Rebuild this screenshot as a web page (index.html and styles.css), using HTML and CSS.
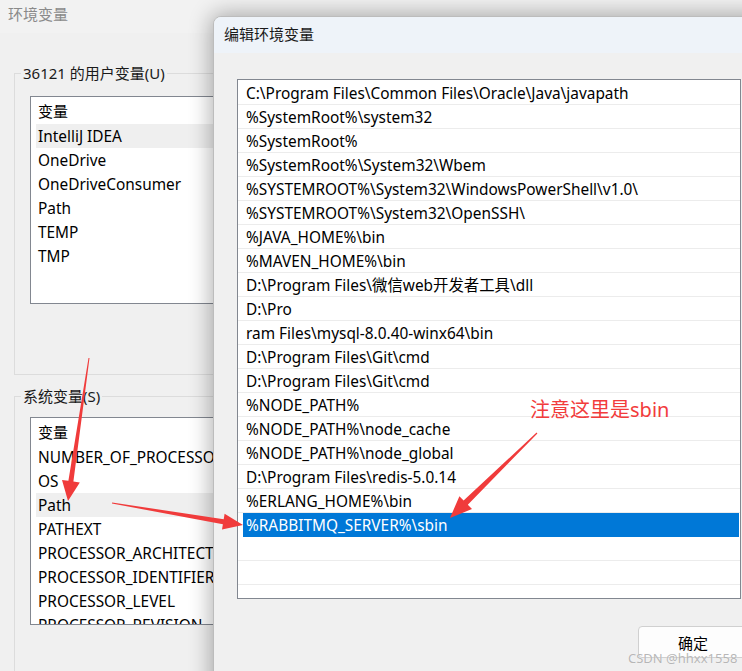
FILE: index.html
```html
<!DOCTYPE html>
<html lang="zh-CN">
<head>
<meta charset="utf-8">
<title>编辑环境变量</title>
<link rel="stylesheet" href="styles.css">
</head>
<body>
<div class="screen">
  <div class="backwin">
    <div class="bw-title">环境变量</div>
    <div class="group g-user">
      <div class="legend">36121 的用户变量(U)</div>
      <div class="list l-user">
        <div class="hdr">变量</div>
        <div class="row hl">IntelliJ IDEA</div>
        <div class="row">OneDrive</div>
        <div class="row">OneDriveConsumer</div>
        <div class="row">Path</div>
        <div class="row">TEMP</div>
        <div class="row">TMP</div>
      </div>
    </div>
    <div class="group g-sys">
      <div class="legend">系统变量(S)</div>
      <div class="list l-sys">
        <div class="hdr">变量</div>
        <div class="row">NUMBER_OF_PROCESSORS</div>
        <div class="row">OS</div>
        <div class="row hl">Path</div>
        <div class="row">PATHEXT</div>
        <div class="row">PROCESSOR_ARCHITECTURE</div>
        <div class="row">PROCESSOR_IDENTIFIER</div>
        <div class="row">PROCESSOR_LEVEL</div>
        <div class="row">PROCESSOR_REVISION</div>
      </div>
    </div>
  </div>

  <div class="dialog">
    <div class="dlg-title">编辑环境变量</div>
    <div class="dlg-body">
      <div class="plist">
        <div class="prow">C:\Program Files\Common Files\Oracle\Java\javapath</div>
        <div class="prow">%SystemRoot%\system32</div>
        <div class="prow">%SystemRoot%</div>
        <div class="prow">%SystemRoot%\System32\Wbem</div>
        <div class="prow">%SYSTEMROOT%\System32\WindowsPowerShell\v1.0\</div>
        <div class="prow">%SYSTEMROOT%\System32\OpenSSH\</div>
        <div class="prow">%JAVA_HOME%\bin</div>
        <div class="prow">%MAVEN_HOME%\bin</div>
        <div class="prow">D:\Program Files\微信web开发者工具\dll</div>
        <div class="prow">D:\Pro</div>
        <div class="prow">ram Files\mysql-8.0.40-winx64\bin</div>
        <div class="prow">D:\Program Files\Git\cmd</div>
        <div class="prow">D:\Program Files\Git\cmd</div>
        <div class="prow">%NODE_PATH%</div>
        <div class="prow">%NODE_PATH%\node_cache</div>
        <div class="prow">%NODE_PATH%\node_global</div>
        <div class="prow">D:\Program Files\redis-5.0.14</div>
        <div class="prow">%ERLANG_HOME%\bin</div>
        <div class="prow sel">%RABBITMQ_SERVER%\sbin</div>
        <div class="prow"></div>
        <div class="prow"></div>
      </div>
      <div class="btnrow">
        <button class="btn" type="button">确定</button>
      </div>
    </div>
  </div>

  <div class="note">注意这里是sbin</div>

  <svg class="arrows" width="742" height="671" viewBox="0 0 742 671" aria-hidden="true">
    <polygon points="88.5,357.9 68.4,480.8 62,479.9 68,501 79.8,482.5 73.4,481.6 89.5,358.1"/>
    <polygon points="112.1,502.5 223.7,519.2 224.6,513.8 243,525 222,529.6 222.9,524.2 111.9,503.5"/>
    <polygon points="536.6,432.6 463.6,500.5 459.4,496.2 450,518 472,509 467.8,504.7 537.4,433.4"/>
  </svg>

  <div class="wm">CSDN @hhxx1558</div>
</div>
</body>
</html>
```

FILE: styles.css
```css
* { box-sizing: border-box; }

html, body {
  margin: 0;
  padding: 0;
  background: #f0f0f0;
}

body {
  font-family: "Noto Sans", "Noto Sans CJK SC", sans-serif;
  font-size: 15px;
  color: #000;
}

.screen {
  position: relative;
  width: 742px;
  height: 671px;
  overflow: hidden;
  background: #f0f0f0;
}

/* ---------- background window ---------- */
.bw-title {
  height: 33px;
  line-height: 28px;
  padding-left: 8px;
  font-size: 15px;
  color: #8a8a8a;
  background: #f2f2f2;
}

.group {
  margin-left: 14px;
  width: 800px;
  border: 1px solid #dcdcdc;
}

.g-user {
  margin-top: 40px;
  height: 302px;
}

.g-sys {
  margin-top: 21px;
  height: 320px;
}

.legend {
  display: block;
  width: max-content;
  margin: -11px 0 0 6px;
  padding: 0 2px;
  height: 20px;
  line-height: 20px;
  background: #f0f0f0;
  color: #1a1a1a;
}

.list {
  margin-left: 15px;
  width: 420px;
  height: 208px;
  border: 1px solid #828790;
  background: #fff;
  overflow: hidden;
  white-space: nowrap;
  font-size: 15.4px;
}

.l-user { margin-top: 13px; }
.l-sys { margin-top: 11px; }

.hdr {
  height: 27px;
  line-height: 28px;
  padding-left: 7px;
  font-size: 15px;
}

.row {
  height: 24px;
  line-height: 24px;
  padding-top: 1px;
  margin-left: 5px;
  padding-left: 2px;
}

.row.hl { background: #efefef; }

/* ---------- dialog ---------- */
.dialog {
  position: absolute;
  left: 213px;
  top: 16px;
  width: 580px;
  height: 700px;
  background: #f0f0f0;
  border: 1px solid #bcbcbc;
  border-radius: 8px 0 0 0;
  box-shadow: 0 0 22px 2px rgba(0, 0, 0, 0.32);
  overflow: hidden;
}

.dlg-title {
  height: 36px;
  line-height: 34px;
  padding-left: 10px;
  background: #eef3f9;
  color: #1a1a1a;
}

.dlg-body {
  padding: 26px 0 0 23px;
}

.plist {
  width: 504px;
  height: 520px;
  padding-top: 1px;
  border: 1px solid #828790;
  background: #fff;
  white-space: nowrap;
  overflow: hidden;
  font-size: 15.4px;
}

.prow {
  height: 24px;
  line-height: 24px;
  padding-top: 1px;
  padding-left: 8px;
  border-bottom: 1px solid #ececec;
}

.prow.sel {
  color: #fff;
  border-bottom-color: transparent;
  background: linear-gradient(to right, #fff 5px, #0078d7 5px);
  margin-right: 1px;
}

.btnrow {
  display: flex;
  margin-top: 27px;
  padding-left: 401px;
}

.btn {
  width: 110px;
  height: 32px;
  border: 1px solid #d0d0d0;
  border-radius: 4px;
  background: #fdfdfd;
  font-family: inherit;
  font-size: 15px;
  color: #000;
  padding: 0;
}

/* ---------- annotations ---------- */
.note {
  position: absolute;
  left: 530px;
  top: 397px;
  font-size: 20px;
  line-height: 26px;
  color: #f23c3c;
}

.arrows {
  position: absolute;
  left: 0;
  top: 0;
  fill: #f03b3b;
}

.wm {
  position: absolute;
  left: 628px;
  top: 649px;
  font-size: 13px;
  line-height: 18px;
  color: rgba(170, 170, 170, 0.85);
  text-shadow: 0 0 1px rgba(255, 255, 255, 0.8);
}
```
